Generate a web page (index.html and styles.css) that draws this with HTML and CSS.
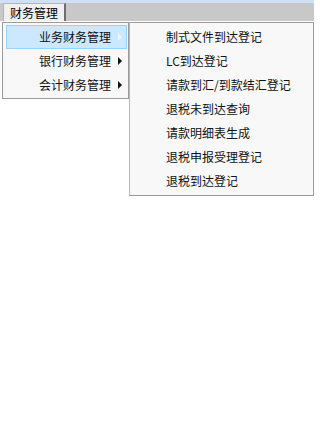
FILE: index.html
```html
<!DOCTYPE html>
<html lang="zh-CN">
<head>
<meta charset="utf-8">
<title>财务管理</title>
<link rel="stylesheet" href="styles.css">
</head>
<body>
<div class="topline"></div>
<div class="menubar">
  <div class="tab">财务管理</div>
</div>
<div class="menu menu-main">
  <div class="item active"><span class="label">业务财务管理</span><span class="arrow"></span></div>
  <div class="item"><span class="label">银行财务管理</span><span class="arrow"></span></div>
  <div class="item"><span class="label">会计财务管理</span><span class="arrow"></span></div>
</div>
<div class="menu menu-sub">
  <div class="item"><span class="label">制式文件到达登记</span></div>
  <div class="item"><span class="label">LC到达登记</span></div>
  <div class="item"><span class="label">请款到汇/到款结汇登记</span></div>
  <div class="item"><span class="label">退税未到达查询</span></div>
  <div class="item"><span class="label">请款明细表生成</span></div>
  <div class="item"><span class="label">退税申报受理登记</span></div>
  <div class="item"><span class="label">退税到达登记</span></div>
</div>
</body>
</html>
```
FILE: styles.css
```css
html, body {
  margin: 0;
  padding: 0;
  background: #ffffff;
  width: 314px;
  height: 425px;
  overflow: hidden;
  font-family: "Noto Sans CJK SC", "Noto Sans", sans-serif;
  font-size: 12px;
  color: #111;
}
.topline {
  height: 3px;
  background: #cfe1f5;
}
.menubar {
  height: 18px;
  background: #c8c8c8;
  display: flex;
  align-items: flex-end;
  padding-left: 3px;
}
.tab {
  height: 17px;
  width: 60px;
  background: #f0f0f0;
  border-left: 1px solid #b4b4b4;
  border-top: 1px solid #b4b4b4;
  border-right: 2px solid #6e6e6e;
  box-sizing: content-box;
  display: flex;
  align-items: center;
  justify-content: center;
  line-height: 17px;
  color: #000;
}
.menu {
  position: absolute;
  top: 22px;
  background: #f8f8f8;
  border: 1px solid #9a9a9a;
  box-sizing: border-box;
  padding: 2px 1px 1px 3px;
  display: flex;
  flex-direction: column;
}
.menu-main {
  left: 2px;
  width: 127px;
  height: 77px;
}
.menu-sub {
  left: 129px;
  width: 185px;
  height: 174px;
  border-left-color: #b8b8b8;
}
.item {
  height: 24px;
  display: flex;
  align-items: center;
  box-sizing: border-box;
  border: 1px solid transparent;
  position: relative;
}
.menu-main .item {
  padding-left: 32px;
}
.menu-sub .item {
  padding-left: 32px;
}
.item.active {
  background: #cce8ff;
  border-color: #99d1ff;
}
.label {
  line-height: 16px;
  white-space: nowrap;
}
.arrow {
  position: absolute;
  right: 4px;
  top: 7px;
  width: 0;
  height: 0;
  border-top: 4px solid transparent;
  border-bottom: 4px solid transparent;
  border-left: 4px solid #111;
}
.item.active .arrow {
  border-left-color: #eef6ff;
}
```
